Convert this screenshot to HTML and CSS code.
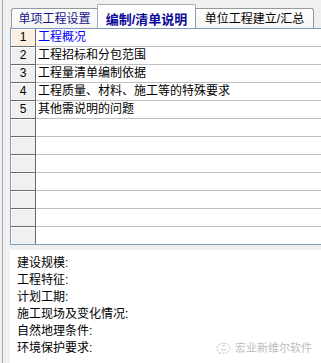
FILE: index.html
```html
<!DOCTYPE html>
<html>
<head>
<meta charset="utf-8">
<link rel="stylesheet" href="styles.css">
</head>
<body>
<div class="frame">
  <div class="tabs">
    <div class="tab tab-first">单项工程设置</div>
    <div class="tab tab-active">编制/清单说明</div>
    <div class="tab tab-last">单位工程建立/汇总</div>
  </div>
  <div class="grid">
    <div class="row"><div class="num num-active">1</div><div class="cell cell-active">工程概况</div></div>
    <div class="row"><div class="num">2</div><div class="cell">工程招标和分包范围</div></div>
    <div class="row"><div class="num">3</div><div class="cell">工程量清单编制依据</div></div>
    <div class="row"><div class="num">4</div><div class="cell">工程质量、材料、施工等的特殊要求</div></div>
    <div class="row"><div class="num">5</div><div class="cell">其他需说明的问题</div></div>
    <div class="row"><div class="num"></div><div class="cell"></div></div>
    <div class="row"><div class="num"></div><div class="cell"></div></div>
    <div class="row"><div class="num"></div><div class="cell"></div></div>
    <div class="row"><div class="num"></div><div class="cell"></div></div>
    <div class="row"><div class="num"></div><div class="cell"></div></div>
    <div class="row"><div class="num"></div><div class="cell"></div></div>
    <div class="row row-last"><div class="num"></div><div class="cell"></div></div>
  </div>
  <div class="notes">
    <div class="note">建设规模:</div>
    <div class="note">工程特征:</div>
    <div class="note">计划工期:</div>
    <div class="note">施工现场及变化情况:</div>
    <div class="note">自然地理条件:</div>
    <div class="note">环境保护要求:</div>
    <div class="watermark">
      <svg class="wm-icon" width="15" height="13" viewBox="0 0 15 13">
        <path d="M7.5 1.2 C3.8 1.2 1.2 3.5 1.2 6.3 C1.2 7.9 2 9.2 3.3 10.1 L2.8 12 L5 10.9 C5.8 11.2 6.6 11.3 7.5 11.3 C11.2 11.3 13.8 9 13.8 6.3 C13.8 3.5 11.2 1.2 7.5 1.2 Z" fill="none" stroke="#c4c4c4" stroke-width="1" stroke-dasharray="2 1.2"/>
        <path d="M4.8 7.2 Q7.5 9.4 10.2 7.2" fill="none" stroke="#c4c4c4" stroke-width="1"/>
        <path d="M6.3 3.6 L8.8 3.6" fill="none" stroke="#c4c4c4" stroke-width="1"/>
      </svg>
      <span class="wm-text">宏业新维尔软件</span>
    </div>
  </div>
</div>
</body>
</html>
```

FILE: styles.css
```css
html, body {
  margin: 0;
  padding: 0;
}
body {
  width: 321px;
  height: 363px;
  overflow: hidden;
  background: #f0f0f0;
  font-family: "Liberation Sans", "Noto Sans CJK SC", sans-serif;
  font-size: 12px;
  color: #000;
}
.frame {
  margin-left: 2px;
  border-left: 1px solid #a9a9a9;
  padding-left: 7px;
  height: 363px;
  box-sizing: border-box;
  display: flex;
  flex-direction: column;
}
.tabs {
  height: 28px;
  flex: none;
  display: flex;
  align-items: flex-end;
  padding-left: 1px;
}
.tab {
  box-sizing: border-box;
  height: 20px;
  border: 1px solid #919b9c;
  border-bottom: none;
  background: linear-gradient(#ffffff, #f4f4f2);
  display: flex;
  align-items: center;
  justify-content: center;
  white-space: nowrap;
  line-height: 1;
  padding-top: 1px;
}
.tab-first {
  width: 87px;
  color: #16168a;
  border-radius: 3px 0 0 0;
}
.tab-active {
  width: 99px;
  height: 24px;
  margin-left: -1px;
  background: #ffffff;
  color: #0a0a9a;
  font-weight: bold;
  font-size: 13px;
  padding-top: 5px;
  border-color: #a7acae;
  border-radius: 2px 2px 0 0;
}
.tab-last {
  width: 119px;
  margin-left: -1px;
  color: #000;
  border-radius: 0 3px 0 0;
}
.grid {
  flex: none;
  border-top: 1px solid #7f9db9;
  border-left: 1px solid #7f9db9;
  border-bottom: 1px solid #7f9db9;
  background: #ffffff;
}
.row {
  display: flex;
  height: 18px;
}
.num {
  box-sizing: border-box;
  width: 25px;
  flex: none;
  background: #f0f0f0;
  border-right: 1px solid #6b6b6b;
  border-bottom: 1px solid #6b6b6b;
  box-shadow: inset 1px 1px 0 #ffffff;
  text-align: center;
  line-height: 17px;
  font-size: 12px;
}
.num-active {
  background: #fdeee2;
}
.cell {
  box-sizing: border-box;
  flex: 1;
  border-bottom: 1px solid #c0c0c0;
  padding-left: 2px;
  line-height: 17px;
  white-space: nowrap;
  overflow: hidden;
}
.cell-active {
  color: #0000ff;
}
.row-last .num,
.row-last .cell {
  border-bottom: none;
}
.row-last {
  height: 17px;
}
.notes {
  flex: 1;
  margin-top: 5px;
  background: #ffffff;
  padding: 5px 7px 0;
  position: relative;
}
.note {
  line-height: 17px;
  white-space: nowrap;
}
.watermark {
  position: absolute;
  right: 9px;
  bottom: 8px;
  display: flex;
  align-items: center;
  gap: 4px;
}
.wm-icon {
  display: block;
}
.wm-text {
  font-size: 11px;
  color: #bdbdbd;
  line-height: 13px;
  letter-spacing: 0;
}
```
